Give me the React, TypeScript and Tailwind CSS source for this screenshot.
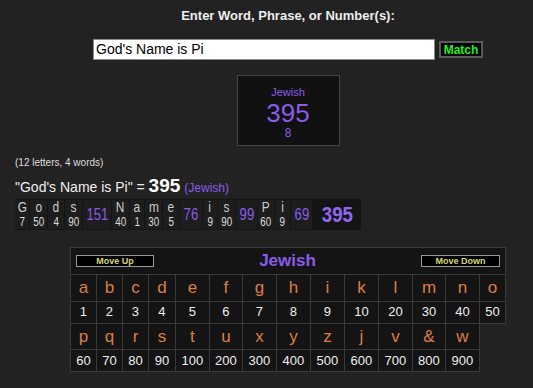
import React from "react";

const purple = "text-[#8a5ce8]";

type Cell = { kind: "l"; l: string; n: number; w: number } | { kind: "t"; v: number; w: number };

const cells: Cell[] = [
  { kind: "l", l: "G", n: 7, w: 15 },
  { kind: "l", l: "o", n: 50, w: 18 },
  { kind: "l", l: "d", n: 4, w: 17 },
  { kind: "l", l: "s", n: 90, w: 18 },
  { kind: "t", v: 151, w: 29 },
  { kind: "l", l: "N", n: 40, w: 18 },
  { kind: "l", l: "a", n: 1, w: 15 },
  { kind: "l", l: "m", n: 30, w: 18 },
  { kind: "l", l: "e", n: 5, w: 17 },
  { kind: "t", v: 76, w: 23 },
  { kind: "l", l: "i", n: 9, w: 15 },
  { kind: "l", l: "s", n: 90, w: 18 },
  { kind: "t", v: 99, w: 22 },
  { kind: "l", l: "P", n: 60, w: 17 },
  { kind: "l", l: "i", n: 9, w: 16 },
  { kind: "t", v: 69, w: 22 },
];

const row1 = ["a", "b", "c", "d", "e", "f", "g", "h", "i", "k", "l", "m", "n", "o"];
const row2 = ["1", "2", "3", "4", "5", "6", "7", "8", "9", "10", "20", "30", "40", "50"];
const row3 = ["p", "q", "r", "s", "t", "u", "x", "y", "z", "j", "v", "&", "w"];
const row4 = ["60", "70", "80", "90", "100", "200", "300", "400", "500", "600", "700", "800", "900"];
const colW = [26, 26, 26, 27, 34, 33, 34, 34, 34, 34, 34, 33, 34, 26];

export default function App() {
  return (
    <div className="min-h-screen bg-[#222222] font-['Liberation_Sans',Arial,sans-serif] text-white overflow-hidden">
      <div className="flex flex-col items-center pl-[43px]">
        <div className="pt-[8px] text-[13px] font-bold text-[#eeeeee] leading-[16px]">
          Enter Word, Phrase, or Number(s):
        </div>
        <div className="mt-[15px] flex items-center gap-[4px]">
          <div className="w-[342px] h-[21px] bg-white border border-[#8a8a8a] flex items-center pl-[2px] text-[14px] text-black">
            God's Name is Pi
          </div>
          <div className="w-[44px] h-[17px] bg-black border-2 border-[#5a5a5a] flex items-center justify-center text-[12px] font-bold text-[#22ee22] leading-none">
            Match
          </div>
        </div>
        <div className="mt-[15px] w-[103px] h-[71px] bg-[#111111] border border-[#444444] flex flex-col items-center pt-[10px]">
          <div className={`text-[11px] leading-[13px] ${purple}`}>Jewish</div>
          <div className={`text-[26px] leading-[28px] ${purple}`}>395</div>
          <div className={`text-[12px] leading-[12px] ${purple}`}>8</div>
        </div>
      </div>

      <div className="px-[15px]">
        <div className="mt-[11px] text-[10px] leading-[12px] text-[#dddddd]">(12 letters, 4 words)</div>
        <div className="mt-[7px] flex items-baseline leading-[20px] h-[20px]">
          <span className="text-[14px] text-[#eeeeee]">"God's Name is Pi" =&nbsp;</span>
          <span className="text-[19px] font-bold text-white">395</span>
          <span className={`text-[12px] ml-[4px] ${purple}`}>(Jewish)</span>
        </div>
        <div className="mt-[3px] flex w-max bg-[#141414] h-[31px] py-px">
          {cells.map((c, i) =>
            c.kind === "l" ? (
              <div
                key={i}
                style={{ width: c.w }}
                className="flex flex-col items-center justify-center bg-[#1d1d1d] border-r border-[#141414] box-border"
              >
                <span className="inline-block scale-x-[0.85] text-[14px] leading-[15px] text-[#cccccc]">{c.l}</span>
                <span className="inline-block scale-x-[0.82] text-[12px] leading-[14px] text-[#dddddd]">{c.n}</span>
              </div>
            ) : (
              <div
                key={i}
                style={{ width: c.w }}
                className={`flex items-center justify-center bg-[#1d1d1d] border-r border-[#141414] box-border ${purple}`}
              >
                <span className="inline-block scale-x-[0.82] text-[16px]">{c.v}</span>
              </div>
            )
          )}
          <div className="w-[48px] flex items-center justify-center text-[#9266f0]">
            <span className="inline-block scale-x-[0.85] text-[22px] font-bold">395</span>
          </div>
        </div>
      </div>

      <div className="flex justify-center pl-[43px] mt-[17px]">
        <table className="border-collapse table-fixed w-[435px]">
          <colgroup>
            {colW.map((w, i) => (
              <col key={i} style={{ width: w }} />
            ))}
          </colgroup>
          <tbody>
            <tr>
              <td colSpan={14} className="border border-[#3a3a3a] bg-[#141414] h-[27px] p-0">
                <div className="flex items-center justify-between px-[5px]">
                  <div className="w-[78px] h-[12px] bg-black border border-[#999999] flex items-center justify-center text-[9px] font-bold text-[#d6d77a] leading-none">
                    Move Up
                  </div>
                  <div className={`text-[17px] font-bold leading-[20px] ${purple}`}>Jewish</div>
                  <div className="w-[79px] h-[12px] bg-black border border-[#999999] flex items-center justify-center text-[9px] font-bold text-[#d6d77a] leading-none">
                    Move Down
                  </div>
                </div>
              </td>
            </tr>
            <tr>
              {row1.map((c) => (
                <td key={c} className="border border-[#3a3a3a] bg-[#141414] h-[26px] p-0 text-center text-[17px] text-[#dd7d45]">
                  {c}
                </td>
              ))}
            </tr>
            <tr>
              {row2.map((c) => (
                <td key={c} className="border border-[#3a3a3a] bg-[#141414] h-[22px] p-0 text-center text-[13px] text-[#eeeeee]">
                  {c}
                </td>
              ))}
            </tr>
            <tr>
              {row3.map((c) => (
                <td key={c} className="border border-[#3a3a3a] bg-[#141414] h-[26px] p-0 text-center text-[17px] text-[#dd7d45]">
                  {c}
                </td>
              ))}
            </tr>
            <tr>
              {row4.map((c) => (
                <td key={c} className="border border-[#3a3a3a] bg-[#141414] h-[22px] p-0 text-center text-[13px] text-[#eeeeee]">
                  {c}
                </td>
              ))}
            </tr>
          </tbody>
        </table>
      </div>
    </div>
  );
}
